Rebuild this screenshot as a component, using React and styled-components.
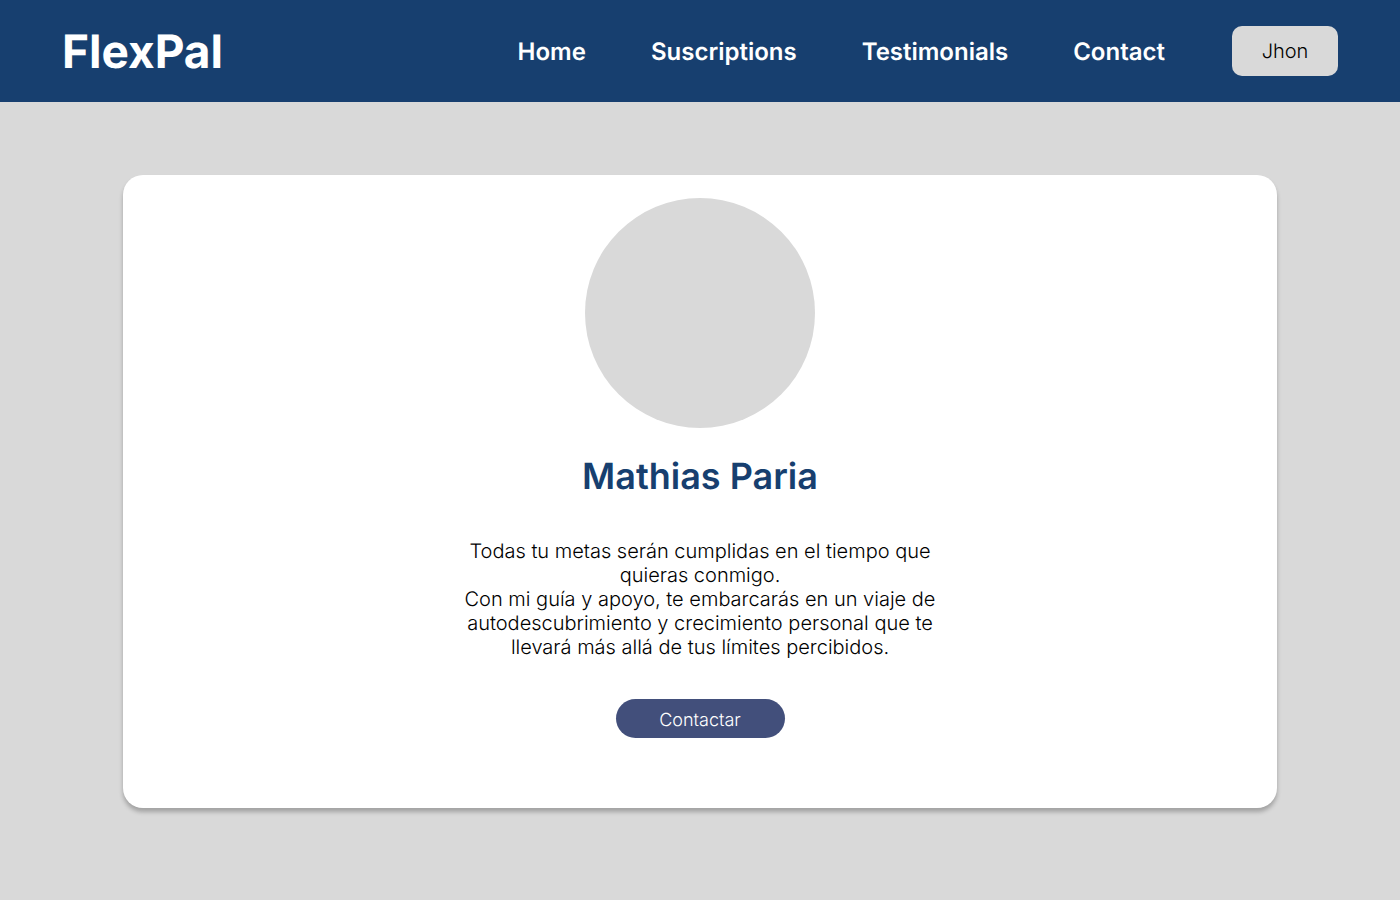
import React from "react";
import styled, { createGlobalStyle } from "styled-components";

const GlobalStyle = createGlobalStyle`
  *, *::before, *::after { box-sizing: border-box; }
  body {
    margin: 0;
    background: #d9d9d9;
    color: #000;
    font-family: Inter, "Liberation Sans", sans-serif;
    text-rendering: geometricPrecision;
  }
  button { text-rendering: inherit; }
`;

const Header = styled.header`
  display: flex;
  align-items: center;
  justify-content: space-between;
  padding: 22px 62px;
  background: #173f6f;
`;

const Logo = styled.a`
  padding-top: 2px;
  color: #fff;
  font-size: 46px;
  font-weight: 700;
  line-height: 56px;
  text-decoration: none;
`;

const Nav = styled.nav`
  display: flex;
  align-items: center;
  gap: 67px;
`;

const NavList = styled.ul`
  display: flex;
  gap: 65px;
  margin: 0;
  padding: 2px 0 0;
  list-style: none;
`;

const NavLink = styled.a`
  color: #fff;
  font-size: 24px;
  font-weight: 600;
  line-height: 30px;
  text-decoration: none;
`;

const UserButton = styled.button`
  width: 106px;
  height: 50px;
  padding: 0;
  border: 0;
  border-radius: 10px;
  background: #d9d9d9;
  color: #000;
  font: 300 20px/24px Inter, "Liberation Sans", sans-serif;
  cursor: pointer;
`;

const Main = styled.main`
  padding: 73px 123px 92px;
`;

const Card = styled.article`
  display: flex;
  flex-direction: column;
  align-items: center;
  padding: 23px 24px 70px;
  border-radius: 20px;
  background: #fff;
  box-shadow: 0 4px 4px rgba(0, 0, 0, 0.25);
`;

const Avatar = styled.div`
  width: 230px;
  height: 230px;
  border-radius: 50%;
  background: #d9d9d9;
`;

const Name = styled.h1`
  margin: 26px 0 41px;
  color: #173f6f;
  font-size: 36px;
  font-weight: 600;
  line-height: 44px;
`;

const Bio = styled.p`
  max-width: 480px;
  margin: 0 0 40px;
  font-size: 20px;
  font-weight: 300;
  line-height: 24px;
  text-align: center;
`;

const ContactButton = styled.button`
  width: 169px;
  height: 39px;
  padding: 4px 0 0;
  border: 0;
  border-radius: 20px;
  background: #424f7b;
  color: #fff;
  font: 300 18px/22px Inter, "Liberation Sans", sans-serif;
  cursor: pointer;
`;

const links = ["Home", "Suscriptions", "Testimonials", "Contact"];

export default function App() {
  return (
    <>
      <GlobalStyle />
      <Header>
        <Logo href="#">FlexPal</Logo>
        <Nav>
          <NavList>
            {links.map((label) => (
              <li key={label}>
                <NavLink href={`#${label.toLowerCase()}`}>{label}</NavLink>
              </li>
            ))}
          </NavList>
          <UserButton type="button">Jhon</UserButton>
        </Nav>
      </Header>
      <Main>
        <Card>
          <Avatar role="img" aria-label="Mathias Paria" />
          <Name>Mathias Paria</Name>
          <Bio>
            Todas tu metas serán cumplidas en el tiempo que quieras conmigo.
            <br />
            Con mi guía y apoyo, te embarcarás en un viaje de autodescubrimiento
            y crecimiento personal que te llevará más allá de tus límites
            percibidos.
          </Bio>
          <ContactButton type="button">Contactar</ContactButton>
        </Card>
      </Main>
    </>
  );
}
